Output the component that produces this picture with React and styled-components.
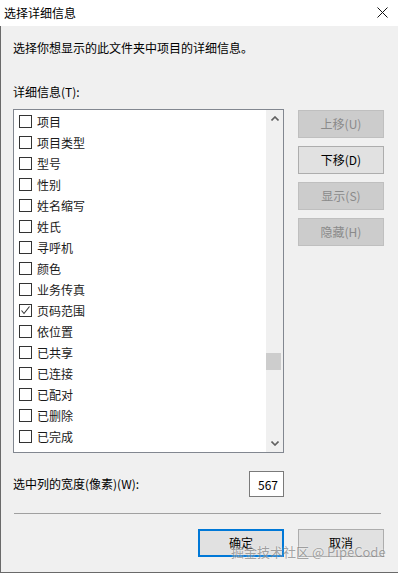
import React from "react";
import styled, { createGlobalStyle } from "styled-components";

const GlobalStyle = createGlobalStyle`
  html, body { margin: 0; padding: 0; background: #f0f0f0; }
  body { font-family: "Noto Sans CJK SC", "Microsoft YaHei", sans-serif; font-size: 12px; color: #000; }
  * { box-sizing: border-box; }
`;

const Window = styled.div`
  position: relative;
  width: 398px;
  height: 573px;
  display: flex;
  flex-direction: column;
  overflow: hidden;
`;

const TitleBar = styled.div`
  height: 26px;
  flex: none;
  background: #ffffff;
  display: flex;
  align-items: center;
  justify-content: space-between;
  padding: 0 10px 1px 4px;
`;

const Title = styled.span`
  font-size: 12px;
  line-height: 16px;
`;

const Body = styled.div`
  flex: 1;
  display: flex;
  flex-direction: column;
  background: #f0f0f0;
  border-left: 1px solid #6a6a6a;
  border-bottom: 1px solid #6a6a6a;
  padding: 14px 14px 0 12px;
`;

const Text = styled.div`
  font-size: 12px;
  line-height: 16px;
  margin-top: ${(p) => p.$mt || 0}px;
  white-space: nowrap;
`;

const MainRow = styled.div`
  display: flex;
  gap: 14px;
  margin-top: 9px;
`;

const ListBox = styled.div`
  width: 271px;
  height: 344px;
  border: 1px solid #828790;
  background: #ffffff;
  display: flex;
`;

const Items = styled.div`
  flex: 1;
  padding: 1px 0 0 5px;
  display: flex;
  flex-direction: column;
  overflow: hidden;
`;

const Item = styled.div`
  height: 21px;
  display: flex;
  align-items: center;
  gap: 5px;
`;

const Box = styled.span`
  width: 13px;
  height: 13px;
  border: 1px solid #333333;
  background: #fff;
  display: flex;
  align-items: center;
  justify-content: center;
  flex: none;
`;

const Label = styled.span`
  font-size: 12px;
  line-height: 16px;
  color: #1a1a1a;
`;

const ScrollBar = styled.div`
  width: 17px;
  background: #f0f0f0;
  display: flex;
  flex-direction: column;
`;

const Arrow = styled.div`
  height: 17px;
  display: flex;
  align-items: center;
  justify-content: center;
  flex: none;
`;

const Track = styled.div`
  flex: 1;
`;

const Thumb = styled.div`
  width: 15px;
  height: 17px;
  background: #cdcdcd;
`;

const SideButtons = styled.div`
  display: flex;
  flex-direction: column;
  gap: 8px;
  padding-top: 1px;
`;

const Button = styled.button`
  width: 86px;
  height: 28px;
  font-family: inherit;
  font-size: 12px;
  line-height: 16px;
  padding: 0;
  background: ${(p) => (p.disabled ? "#cccccc" : "#e1e1e1")};
  color: ${(p) => (p.disabled ? "#8a8a8a" : "#000000")};
  border: ${(p) =>
    p.$primary ? "2px solid #0078d7" : p.disabled ? "1px solid #bfbfbf" : "1px solid #adadad"};
  cursor: default;
`;

const WidthRow = styled.div`
  display: flex;
  align-items: center;
  justify-content: space-between;
  margin-top: 18px;
  padding-right: 100px;
`;

const NumberBox = styled.div`
  width: 35px;
  height: 26px;
  border: 1px solid #7a7a7a;
  background: #fff;
  display: flex;
  align-items: center;
  justify-content: flex-end;
  padding-right: 5px;
  font-size: 12px;
`;

const Separator = styled.div`
  height: 1px;
  background: #a0a0a0;
  margin: 16px 3px 0 1px;
`;

const Footer = styled.div`
  display: flex;
  justify-content: flex-end;
  gap: 14px;
  margin-top: 15px;
`;

const Watermark = styled.div`
  position: absolute;
  left: 231px;
  top: 545px;
  font-size: 13px;
  line-height: 14px;
  color: rgba(90, 90, 90, 0.55);
  white-space: nowrap;
  text-shadow: 0 0 2px rgba(255, 255, 255, 0.8);
  pointer-events: none;
`;

const CloseIcon = () => (
  <svg width="11" height="11" viewBox="0 0 11 11">
    <path d="M0.5 0.5 L10.5 10.5 M10.5 0.5 L0.5 10.5" stroke="#111" strokeWidth="1" fill="none" />
  </svg>
);

const Check = () => (
  <svg width="11" height="11" viewBox="0 0 11 11">
    <path d="M1.5 5.5 L4 8.5 L9.5 1.5" stroke="#333" strokeWidth="1.1" fill="none" />
  </svg>
);

const Chevron = ({ up }) => (
  <svg width="8" height="5" viewBox="0 0 8 5">
    <path
      d={up ? "M0.5 4.5 L4 1 L7.5 4.5" : "M0.5 0.5 L4 4 L7.5 0.5"}
      stroke="#606060"
      strokeWidth="1.6"
      fill="none"
    />
  </svg>
);

const items = [
  "项目",
  "项目类型",
  "型号",
  "性别",
  "姓名缩写",
  "姓氏",
  "寻呼机",
  "颜色",
  "业务传真",
  "页码范围",
  "依位置",
  "已共享",
  "已连接",
  "已配对",
  "已删除",
  "已完成",
];

export default function App() {
  return (
    <>
      <GlobalStyle />
      <Window>
        <TitleBar>
          <Title>选择详细信息</Title>
          <CloseIcon />
        </TitleBar>
        <Body>
          <Text>选择你想显示的此文件夹中项目的详细信息。</Text>
          <Text $mt={28}>详细信息(T):</Text>
          <MainRow>
            <ListBox>
              <Items>
                {items.map((name) => (
                  <Item key={name}>
                    <Box>{name === "页码范围" && <Check />}</Box>
                    <Label>{name}</Label>
                  </Item>
                ))}
              </Items>
              <ScrollBar>
                <Arrow>
                  <Chevron up />
                </Arrow>
                <Track>
                  <Thumb style={{ marginTop: 226 }} />
                </Track>
                <Arrow>
                  <Chevron />
                </Arrow>
              </ScrollBar>
            </ListBox>
            <SideButtons>
              <Button disabled>上移(U)</Button>
              <Button>下移(D)</Button>
              <Button disabled>显示(S)</Button>
              <Button disabled>隐藏(H)</Button>
            </SideButtons>
          </MainRow>
          <WidthRow>
            <Text>选中列的宽度(像素)(W):</Text>
            <NumberBox>567</NumberBox>
          </WidthRow>
          <Separator />
          <Footer>
            <Button $primary>确定</Button>
            <Button>取消</Button>
          </Footer>
        </Body>
        <Watermark>掘金技术社区 @ PipeCode</Watermark>
      </Window>
    </>
  );
}
